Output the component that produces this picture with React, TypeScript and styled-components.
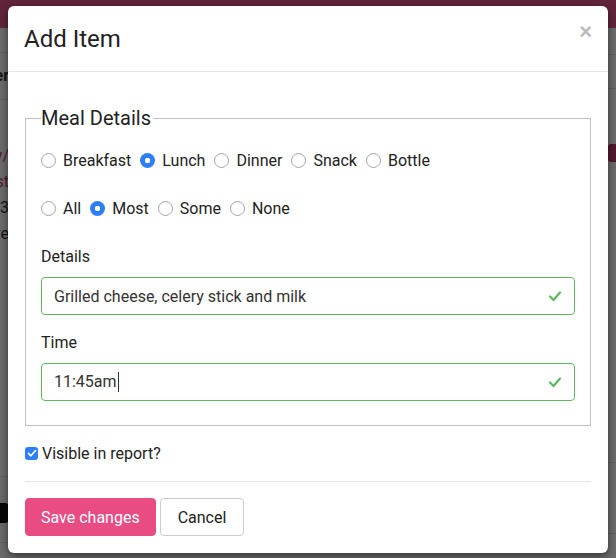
import React, { useState } from "react";
import styled, { createGlobalStyle } from "styled-components";

const GlobalStyle = createGlobalStyle`
  html, body {
    margin: 0;
    padding: 0;
    width: 616px;
    height: 558px;
    overflow: hidden;
    font-family: Roboto, "Liberation Sans", Arial, sans-serif;
    color: #333;
  }
  * { box-sizing: border-box; }
`;

// Page behind the modal
const Page = styled.div`
  position: relative;
  width: 616px;
  height: 558px;
  background: #fff;
  overflow: hidden;
`;

const TopBar = styled.div`
  height: 28px;
  background: #e9568f;
`;

const BackLayout = styled.div`
  display: flex;
  justify-content: space-between;
`;

const SideCol = styled.div`
  width: 9px;
  overflow: hidden;
  display: flex;
  flex-direction: column;
  align-items: flex-end;
`;

const RightCol = styled.div`
  width: 9px;
  display: flex;
  flex-direction: column;
`;

const BackRule = styled.div<{ $gap: number }>`
  align-self: stretch;
  height: 1px;
  background: #ddd;
  margin-top: ${(p) => p.$gap}px;
`;

const BackText = styled.div<{ $color?: string; $bold?: boolean }>`
  font-size: 16px;
  line-height: 26px;
  white-space: nowrap;
  color: ${(p) => p.$color || "#333"};
  font-weight: ${(p) => (p.$bold ? 700 : 400)};
`;

const Badge = styled.div`
  margin-top: 55px;
  margin-left: 1px;
  height: 18px;
  background: #c23b6e;
  border-radius: 3px 0 0 3px;
`;

const DarkPill = styled.div`
  margin-top: 26px;
  width: 20px;
  height: 20px;
  background: #111;
  border-radius: 4px;
`;

const Overlay = styled.div`
  position: absolute;
  inset: 0;
  background: rgba(0, 0, 0, 0.58);
`;

// Modal
const Modal = styled.div`
  position: absolute;
  left: 8px;
  top: 6px;
  width: 600px;
  background: #fff;
  border-radius: 6px;
  box-shadow: 0 3px 9px rgba(0, 0, 0, 0.5);
`;

const Header = styled.div`
  display: flex;
  align-items: flex-start;
  justify-content: space-between;
  height: 66px;
  padding: 16px 16px 0 16px;
  border-bottom: 1px solid #e5e5e5;
`;

const Title = styled.h4`
  margin: 0;
  font-size: 24px;
  font-weight: 400;
  line-height: 34px;
  color: #222;
`;

const Close = styled.button`
  border: 0;
  background: none;
  padding: 0;
  margin-top: -1px;
  font-size: 22px;
  font-weight: 700;
  line-height: 1;
  color: #bbb;
  font-family: "Liberation Sans", Arial, sans-serif;
`;

const Body = styled.div`
  padding: 34px 17px 0 17px;
`;

const Fieldset = styled.fieldset`
  margin: 0;
  padding: 4px 15px 24px 15px;
  border: 1px solid #c0c0c0;
`;

const Legend = styled.legend`
  font-size: 20px;
  line-height: 24px;
  padding: 0 2px 0 0;
  color: #222;
`;

const RadioGroup = styled.div`
  margin-bottom: 17px;
`;

const RadioRow = styled.div`
  display: flex;
  align-items: center;
  gap: 9px;
  height: 48px;
  padding-top: 4px;
`;

const RadioLabel = styled.label`
  display: flex;
  align-items: center;
  gap: 7px;
  font-size: 16px;
  color: #222;
`;

const RadioDot = styled.span<{ $checked: boolean }>`
  width: 15px;
  height: 15px;
  border-radius: 50%;
  border: ${(p) => (p.$checked ? "0" : "1px solid #a5a5a5")};
  background: ${(p) =>
    p.$checked
      ? "radial-gradient(circle, #fff 0 2.5px, #2d7ff9 3px)"
      : "#fff"};
  flex: none;
`;

const FieldLabel = styled.div`
  font-size: 16px;
  line-height: 20px;
  color: #222;
  margin-top: 6px;
  margin-bottom: 10px;
`;

const InputWrap = styled.div`
  height: 38px;
  border: 1px solid #5cb85c;
  border-radius: 4px;
  display: flex;
  align-items: center;
  padding: 0 12px;
  margin-bottom: 18px;
  &:last-child { margin-bottom: 0; }
`;

const InputText = styled.span`
  font-size: 16px;
  color: #333;
  flex: 1;
`;

const Caret = styled.span`
  display: inline-block;
  width: 1px;
  height: 20px;
  background: #333;
  vertical-align: middle;
  margin-left: 1px;
`;

const CheckLine = styled.label`
  display: flex;
  align-items: center;
  gap: 4px;
  margin-top: 16px;
  font-size: 16px;
  color: #222;
  height: 22px;
`;

const CheckBox = styled.span`
  width: 13px;
  height: 13px;
  border-radius: 3px;
  background: #2d7ff9;
  display: flex;
  align-items: center;
  justify-content: center;
`;

const Footer = styled.div`
  margin-top: 17px;
  border-top: 1px solid #e5e5e5;
  padding: 16px 0 17px 0;
  display: flex;
  gap: 4px;
`;

const Button = styled.button<{ $primary?: boolean }>`
  height: 38px;
  padding: 0 ${(p) => (p.$primary ? 15 : 17)}px;
  font-size: 16px;
  font-family: Roboto, "Liberation Sans", Arial, sans-serif;
  border-radius: 4px;
  border: 1px solid ${(p) => (p.$primary ? "#e84c83" : "#ccc")};
  background: ${(p) => (p.$primary ? "#e84c83" : "#fff")};
  color: ${(p) => (p.$primary ? "#fff" : "#222")};
`;

const Check = ({ color = "#5cb85c", size = 14 }) => (
  <svg width={size} height={size} viewBox="0 0 14 14">
    <path d="M2 7.5 L5.5 11 L12 3.5" fill="none" stroke={color} strokeWidth="2.2" strokeLinecap="round" strokeLinejoin="round" />
  </svg>
);

const Radio = ({ label, checked }: { label: string; checked: boolean }) => (
  <RadioLabel>
    <RadioDot $checked={checked} />
    {label}
  </RadioLabel>
);

export default function App() {
  const [meal] = useState("Lunch");
  const [amount] = useState("Most");
  return (
    <Page>
      <GlobalStyle />
      <TopBar />
      <BackLayout>
        <SideCol>
          <BackRule $gap={24} />
          <BackText $bold style={{ marginTop: 10 }}>Other</BackText>
          <BackRule $gap={10} />
          <BackText $color="#c23b6e" style={{ marginTop: 43 }}>y/</BackText>
          <BackText $color="#c23b6e">st</BackText>
          <BackText>03</BackText>
          <BackText>ye</BackText>
          <BackRule $gap={229} />
          <DarkPill />
          <BackRule $gap={19} />
        </SideCol>
        <RightCol>
          <BackRule $gap={26} />
          <BackRule $gap={33} />
          <Badge />
          <BackRule $gap={300} />
          <BackRule $gap={70} />
        </RightCol>
      </BackLayout>
      <Overlay />
      <Modal>
        <Header>
          <Title>Add Item</Title>
          <Close>×</Close>
        </Header>
        <Body>
          <Fieldset>
            <Legend>Meal Details</Legend>
            <RadioGroup>
              <RadioRow>
                {["Breakfast", "Lunch", "Dinner", "Snack", "Bottle"].map((m) => (
                  <Radio key={m} label={m} checked={m === meal} />
                ))}
              </RadioRow>
              <RadioRow>
                {["All", "Most", "Some", "None"].map((a) => (
                  <Radio key={a} label={a} checked={a === amount} />
                ))}
              </RadioRow>
            </RadioGroup>
            <FieldLabel>Details</FieldLabel>
            <InputWrap>
              <InputText>Grilled cheese, celery stick and milk</InputText>
              <Check />
            </InputWrap>
            <FieldLabel>Time</FieldLabel>
            <InputWrap>
              <InputText>
                11:45am
                <Caret />
              </InputText>
              <Check />
            </InputWrap>
          </Fieldset>
          <CheckLine>
            <CheckBox>
              <Check color="#fff" size={10} />
            </CheckBox>
            Visible in report?
          </CheckLine>
          <Footer>
            <Button $primary>Save changes</Button>
            <Button>Cancel</Button>
          </Footer>
        </Body>
      </Modal>
    </Page>
  );
}
